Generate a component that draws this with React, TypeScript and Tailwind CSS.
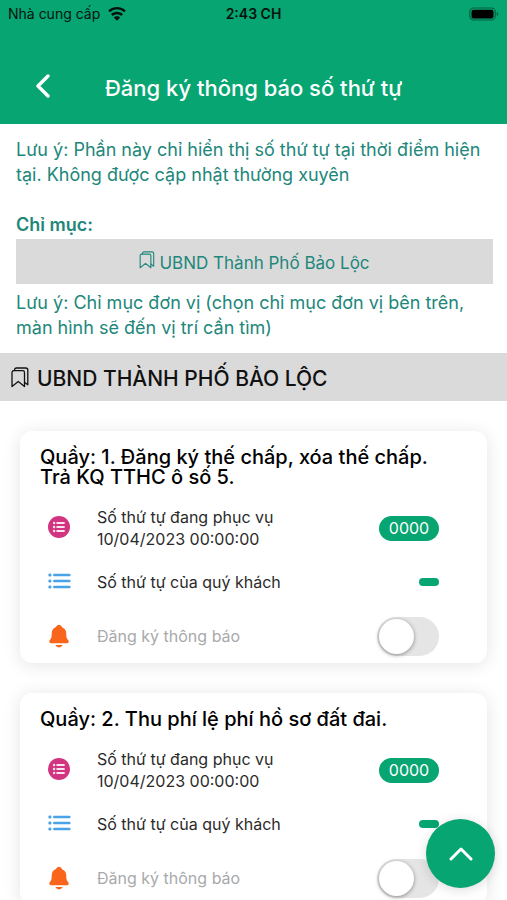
import { useId, useState } from "react";
import { IoNotifications } from "react-icons/io5";

function WifiIcon() {
  return (
    <svg viewBox="0 0 18 14" className="h-[14px] w-[18px]" fill="#06130d" aria-hidden="true">
      <path d="M9 0C5.600 0 2.400 1.300 0.200 3.500L1.900 5.300A10 10 0 0 1 16.100 5.300L17.800 3.500C15.600 1.300 12.400 0 9 0Z" />
      <path d="M9 4.800C6.700 4.800 4.600 5.700 3 7.100L4.700 8.900A6.200 6.200 0 0 1 13.300 8.900L15 7.100C13.400 5.700 11.300 4.800 9 4.800Z" />
      <path d="M9 9.200C7.700 9.200 6.600 9.700 5.800 10.500L9 13.800L12.200 10.500C11.400 9.700 10.300 9.200 9 9.200Z" />
    </svg>
  );
}

function BatteryIcon() {
  return (
    <svg viewBox="0 0 30 15" className="h-[15px] w-[30px]" aria-hidden="true">
      <rect x="0.750" y="1" width="25.500" height="12" rx="4" fill="none" stroke="#04613f" strokeWidth="1.200" />
      <rect x="2.500" y="2.700" width="22" height="8.700" rx="2" fill="#000" />
      <path d="M27.800 5V9.200C28.800 8.800 29.300 8 29.300 7.100S28.800 5.400 27.800 5Z" fill="#04613f" />
    </svg>
  );
}

function BookmarksIcon({ className }: { className: string }) {
  return (
    <svg
      viewBox="0 0 18 21"
      className={className}
      fill="none"
      stroke="currentColor"
      strokeWidth="1.300"
      strokeLinejoin="round"
      strokeLinecap="round"
      aria-hidden="true"
    >
      <path d="M1 19.500V5.500A1.800 1.800 0 0 1 2.800 3.700H11.700A1.800 1.800 0 0 1 13.500 5.500V19.500L7.250 14.500Z" />
      <path d="M3.600 3.500V2.800A1.800 1.800 0 0 1 5.400 1H14.700A2.100 2.100 0 0 1 16.800 3.100V17.800L13.700 15.400" />
    </svg>
  );
}

function ListCircleIcon() {
  return (
    <svg viewBox="0 0 22 22" className="size-[22px]" aria-hidden="true">
      <circle cx="11" cy="11" r="11" fill="#d2357f" />
      <g fill="#fbe3ef">
        <circle cx="6.100" cy="7" r="1.200" />
        <circle cx="6.100" cy="11" r="1.200" />
        <circle cx="6.100" cy="15" r="1.200" />
        <rect x="8.300" y="5.900" width="8.500" height="2.200" rx="0.800" />
        <rect x="8.300" y="9.900" width="8.500" height="2.200" rx="0.800" />
        <rect x="8.300" y="13.900" width="8.500" height="2.200" rx="0.800" />
      </g>
    </svg>
  );
}

function ListIcon() {
  return (
    <svg viewBox="0 0 23 16" className="h-4 w-[23px]" fill="#4aa3e6" aria-hidden="true">
      <rect x="0.400" y="0.500" width="3" height="3" rx="1.200" />
      <rect x="0.400" y="6.500" width="3" height="3" rx="1.200" />
      <rect x="0.400" y="12.500" width="3" height="3" rx="1.200" />
      <rect x="5" y="0.800" width="17.600" height="2.500" rx="1.200" />
      <rect x="5" y="6.800" width="17.600" height="2.500" rx="1.200" />
      <rect x="5" y="12.800" width="17.600" height="2.500" rx="1.200" />
    </svg>
  );
}

function Counter({ title, time, serving }: { title: string; time: string; serving: string }) {
  const id = useId();
  const [notify, setNotify] = useState(false);
  return (
    <article className="rounded-xl bg-white pt-4 pr-12 pl-5 shadow-[0_2px_18px_rgba(0,0,0,0.11)]">
      <h3 className="mb-3.5 text-xl leading-5 font-medium text-black">{title}</h3>
      <div className="flex h-[54px] items-center text-base leading-[22px] text-[#2b2b2b]">
        <div className="flex w-[57px] pb-0.5 pl-2">
          <ListCircleIcon />
        </div>
        <p className="flex-1">
          Số thứ tự đang phục vụ
          <br />
          {time}
        </p>
        <span className="flex h-[25px] w-[60px] items-center justify-center rounded-full bg-[#06a572] text-base text-white">
          {serving}
        </span>
      </div>
      <div className="flex h-[54px] items-center text-base leading-[22px] text-[#2b2b2b]">
        <div className="flex w-[57px] pb-0.5 pl-2">
          <ListIcon />
        </div>
        <p className="flex-1">Số thứ tự của quý khách</p>
        <span className="h-2 w-5 rounded-full bg-[#06a572]" />
      </div>
      <div className="flex h-[54px] items-center text-base leading-[22px] text-[#a9a9ab]">
        <div className="flex w-[57px] pl-[6px]">
          <IoNotifications className="size-[26px] text-[#f8651b]" />
        </div>
        <label htmlFor={id} className="flex-1">
          Đăng ký thông báo
        </label>
        <label htmlFor={id} className="flex">
          <input
            id={id}
            type="checkbox"
            checked={notify}
            onChange={(e) => setNotify(e.target.checked)}
            className="peer sr-only"
          />
          <span className="flex h-[39px] w-[62px] items-center rounded-full bg-[#e5e5e5] px-0.5 peer-checked:justify-end peer-checked:bg-[#06a572]">
            <span className="size-[35px] rounded-full bg-white shadow-[0_1px_4px_rgba(0,0,0,0.4)]" />
          </span>
        </label>
      </div>
    </article>
  );
}

export default function App() {
  return (
    <div className="flex h-screen flex-col overflow-hidden bg-white font-[Inter,'Noto_Sans',sans-serif]">
      <header className="shrink-0 bg-[#06a572]">
        <div className="grid h-7 grid-cols-[1fr_auto_1fr] items-center px-2 text-sm text-[#06130d]">
          <div className="flex items-center gap-2">
            <span>Nhà cung cấp</span>
            <WifiIcon />
          </div>
          <span className="font-semibold">2:43 CH</span>
          <div className="flex justify-end">
            <BatteryIcon />
          </div>
        </div>
        <div className="grid h-24 grid-cols-[48px_1fr_48px] items-center px-5 pt-6 text-white">
          <button type="button" aria-label="Quay lại" className="flex h-12 items-center pb-1 pl-4">
            <svg viewBox="0 0 14 24" className="h-6 w-[14px]" fill="none" stroke="currentColor" strokeWidth="3.400" strokeLinecap="round" strokeLinejoin="round">
              <path d="M12 2L2 12L12 22" />
            </svg>
          </button>
          <h1 className="text-center text-[22px] leading-7 font-medium whitespace-nowrap">Đăng ký thông báo số thứ tự</h1>
        </div>
      </header>

      <main className="min-h-0 flex-1 overflow-hidden">
        <section className="pt-[13px] pr-3.5 pl-4 text-lg leading-[25px] text-[#21877a]">
          <p>Lưu ý: Phần này chỉ hiển thị số thứ tự tại thời điểm hiện tại. Không được cập nhật thường xuyên</p>
          <h2 className="mt-[25px] font-semibold">Chỉ mục:</h2>
          <button type="button" className="mt-0.5 flex h-[45px] w-full items-center justify-center gap-1 bg-[#dadada] text-[17px]">
            <BookmarksIcon className="mb-1 h-[18px] w-4" />
            <span className="pt-1">UBND Thành Phố Bảo Lộc</span>
          </button>
          <p className="mt-1.5">Lưu ý: Chỉ mục đơn vị (chọn chỉ mục đơn vị bên trên, màn hình sẽ đến vị trí cần tìm)</p>
        </section>

        <h2 className="mt-[13px] flex h-12 items-center gap-2 bg-[#dadada] px-[11px] text-[21px] font-medium text-[#111]">
          <BookmarksIcon className="h-[21px] w-[18px]" />
          <span className="pt-1">UBND THÀNH PHỐ BẢO LỘC</span>
        </h2>

        <div className="flex flex-col gap-[30px] px-5 pt-[30px]">
          <Counter title="Quầy: 1. Đăng ký thế chấp, xóa thế chấp. Trả KQ TTHC ô số 5." time="10/04/2023 00:00:00" serving="0000" />
          <Counter title="Quầy: 2. Thu phí lệ phí hồ sơ đất đai." time="10/04/2023 00:00:00" serving="0000" />
        </div>
      </main>

      <button
        type="button"
        aria-label="Lên đầu trang"
        className="fixed right-3 bottom-3 flex size-[69px] items-center justify-center rounded-full bg-[#06a572] text-white shadow-[0_2px_12px_rgba(0,0,0,0.14)]"
      >
        <svg viewBox="0 0 24 14" className="h-[14px] w-6" fill="none" stroke="currentColor" strokeWidth="3" strokeLinecap="round" strokeLinejoin="round">
          <path d="M2 12L12 2L22 12" />
        </svg>
      </button>
    </div>
  );
}
